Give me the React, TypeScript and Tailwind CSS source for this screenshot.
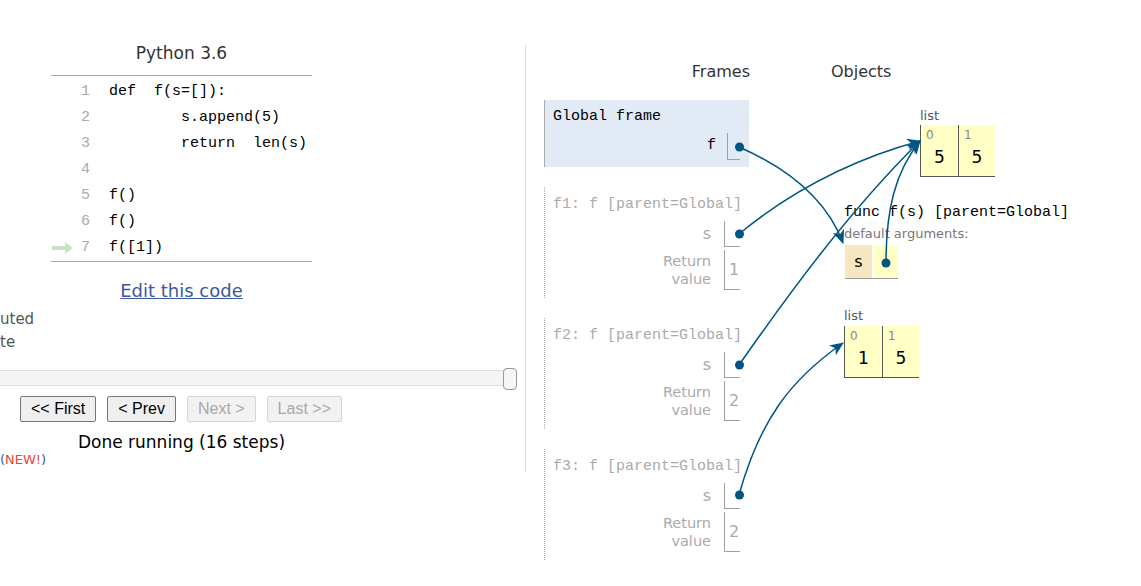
import React from 'react'

const sans = "font-['DejaVu_Sans',Verdana,sans-serif]"
const mono = "font-['Liberation_Mono',monospace]"
const arial = "font-['Liberation_Sans',Arial,sans-serif]"

const code = [
  'def  f(s=[]):',
  '        s.append(5)',
  '        return  len(s)',
  '',
  'f()',
  'f()',
  'f([1])',
]

const ARROW = '#005583'

function CodeLine({ n, text, current }: { n: number; text: string; current?: boolean }) {
  return (
    <div className="flex items-center h-[26px]">
      <div className="w-[22px] h-full flex items-center">
        {current && (
          <svg width="22" height="12" viewBox="0 0 22 12">
            <rect x="1" y="4" width="14" height="4" fill="#c6e4c6" />
            <path d="M14 0 L22 6 L14 12 Z" fill="#c6e4c6" />
          </svg>
        )}
      </div>
      <div className={`w-[17px] text-right text-[15px] text-[#aaa] ${mono}`}>{n}</div>
      <div className={`ml-[19px] whitespace-pre text-[15px] text-black ${mono}`}>{text}</div>
    </div>
  )
}

function Btn({ label, disabled }: { label: string; disabled?: boolean }) {
  return (
    <button
      type="button"
      className={`h-[26px] px-[10px] rounded-[2px] border text-[16px] leading-none ${arial} ${
        disabled ? 'border-[#d4d4d4] bg-[#f2f2f2] text-[#a8a8a8]' : 'border-[#767676] bg-[#efefef] text-black'
      }`}
    >
      {label}
    </button>
  )
}

function VarRow({ name, value, tall, monoName, dim }: { name: string; value?: string; tall?: boolean; monoName?: boolean; dim?: boolean }) {
  return (
    <div className="flex items-center justify-end">
      <div
        className={`text-right whitespace-pre-line ${dim ? 'text-[#aaa]' : 'text-black'} ${
          monoName ? `text-[15px] ${mono}` : tall ? `text-[14.5px] leading-[18px] ${sans}` : `text-[16px] ${sans}`
        }`}
      >
        {name}
      </div>
      <div
        className={`${monoName ? 'ml-[11px] w-[13px] h-[27px]' : 'ml-[13px] w-[16px]'} ${tall ? 'h-[40px]' : monoName ? '' : 'h-[26px]'} border-l border-b border-[#a0a0a0] flex items-center pl-[4px] text-[16px] text-[#aaa] ${sans}`}
      >
        {value}
      </div>
    </div>
  )
}

function Frame({ title, ret }: { title: string; ret: string }) {
  return (
    <div className="mt-[20px] h-[111px] border-l border-dotted border-[#aaa] pl-[8px] pt-[9px] pr-[9px]">
      <div className={`whitespace-nowrap text-[15px] leading-[17px] text-[#aaa] ${mono}`}>{title}</div>
      <div className="mt-[8px]">
        <VarRow name="s" dim />
      </div>
      <div className="mt-[3px]">
        <VarRow name={'Return\nvalue'} value={ret} tall dim />
      </div>
    </div>
  )
}

function ListCells({ items }: { items: string[] }) {
  return (
    <div className="flex">
      {items.map((v, i) => (
        <div
          key={i}
          className={`h-[52px] bg-[#ffffc6] border-b border-l border-[#555] ${i === 0 ? 'w-[38px]' : 'w-[37px]'} flex flex-col`}
        >
          <div className={`pt-[3px] pl-[5px] text-[12px] leading-[14px] text-[#888] ${sans}`}>{i}</div>
          <div className={`mt-[5px] text-center text-[17px] leading-[20px] text-black ${sans}`}>{v}</div>
        </div>
      ))}
    </div>
  )
}

export default function App() {
  return (
    <div className="relative w-[1141px] h-[586px] overflow-hidden bg-white">
      <div className="flex items-start">
        {/* left: code + controls */}
        <div className="w-[526px] shrink-0 mt-[45px] h-[427px] border-r border-[#ddd]">
          <div className="ml-[51px] w-[261px]">
            <div className={`text-center text-[17px] leading-[17px] text-[#333] ${sans}`}>Python 3.6</div>
            <div className="mt-[13px] border-t border-b border-[#aaa] pt-[3px]">
              {code.map((t, i) => (
                <CodeLine key={i} n={i + 1} text={t} current={i === 6} />
              ))}
            </div>
            <div className={`mt-[19px] text-center text-[18px] leading-[20px] ${sans}`}>
              <a className="text-[#3d58a2] underline">Edit this code</a>
            </div>
          </div>
          <div className={`mt-[7px] text-[15px] leading-[23px] text-[#555] ${sans}`}>
            <div>uted</div>
            <div>te</div>
          </div>
          <div className="relative mt-[14px] h-[22px] w-[517px]">
            <div className="absolute left-0 top-[2px] h-[16px] w-[510px] border-y border-[#ddd] bg-[#f5f5f5]" />
            <div className="absolute left-[503px] top-0 h-[22px] w-[14px] rounded-[4px] border border-[#999] bg-[#f6f6f6]" />
          </div>
          <div className="mt-[6px] ml-[20px] flex gap-[11px]">
            <Btn label="<< First" />
            <Btn label="< Prev" />
            <Btn label="Next >" disabled />
            <Btn label="Last >>" disabled />
          </div>
          <div className={`ml-[51px] w-[261px] mt-[10px] text-center text-[17px] leading-[20px] text-black ${sans}`}>
            Done running (16 steps)
          </div>
          <div className={`text-[13px] leading-[16px] ${sans}`}>
            <span className="text-[#3d58a2]">(</span>
            <span className="text-[#e8453c]">NEW!</span>
            <span className="text-[#3d58a2]">)</span>
          </div>
        </div>

        {/* right: frames and objects */}
        <div className="flex-1">
          <div className={`mt-[64px] flex text-[16px] leading-[16px] text-[#333] ${sans}`}>
            <div className="w-[224px] text-right">Frames</div>
            <div className="ml-[81px]">Objects</div>
          </div>
          <div className="mt-[20px] flex items-start">
            <div className="ml-[18px] w-[205px] shrink-0">
              <div className="h-[67px] bg-[#e2eaf6] border-l border-[#aaa] pl-[8px] pt-[8px] pr-[9px]">
                <div className={`text-[15px] leading-[17px] text-black ${mono}`}>Global frame</div>
                <div className="mt-[8px]">
                  <VarRow name="f" monoName />
                </div>
              </div>
              <Frame title="f1: f [parent=Global]" ret="1" />
              <Frame title="f2: f [parent=Global]" ret="2" />
              <Frame title="f3: f [parent=Global]" ret="2" />
            </div>

            <div className="ml-[95px]">
              <div className="ml-[76px] mt-[8px]">
                <div className={`text-[13px] leading-[15px] text-[#555] ${sans}`}>list</div>
                <div className="mt-[2px]">
                  <ListCells items={['5', '5']} />
                </div>
              </div>
              <div className={`mt-[27px] text-[15px] leading-[17px] text-black whitespace-pre ${mono}`}>
                func f(s) [parent=Global]
              </div>
              <div className={`mt-[5px] text-[13px] leading-[16px] text-[#777] ${sans}`}>default arguments:</div>
              <div className="mt-[3px] ml-[1px] flex gap-[1px] border-b border-[#999] w-fit">
                <div className={`w-[27px] h-[33px] bg-[#f7e7c0] flex items-center justify-center text-[16px] text-black ${sans}`}>s</div>
                <div className="w-[25px] h-[33px] bg-[#ffffc6]" />
              </div>
              <div className="mt-[29px]">
                <div className={`text-[13px] leading-[15px] text-[#555] ${sans}`}>list</div>
                <div className="mt-[3px]">
                  <ListCells items={['1', '5']} />
                </div>
              </div>
            </div>
          </div>
        </div>
      </div>

      {/* pointer arrows */}
      <svg className="absolute left-0 top-0 pointer-events-none" width="1141" height="586" viewBox="0 0 1141 586">
        <defs>
          <marker id="ah" markerUnits="userSpaceOnUse" markerWidth="14" markerHeight="12" refX="13" refY="6" orient="auto">
            <path d="M0 0 L14 6 L0 12 L4 6 Z" fill={ARROW} />
          </marker>
        </defs>
        <g fill="none" stroke={ARROW} strokeWidth="1.5">
          <path d="M739 147 C780 165 825 195 843 243" markerEnd="url(#ah)" />
          <path d="M739 234 C790 192 850 160 920 141" markerEnd="url(#ah)" />
          <path d="M739 365 C790 292 850 210 920 141" markerEnd="url(#ah)" />
          <path d="M886 263 C886 210 895 172 920 141" markerEnd="url(#ah)" />
          <path d="M739 495 C760 420 790 380 843 343" markerEnd="url(#ah)" />
        </g>
        <g fill={ARROW}>
          <circle cx="739.5" cy="147" r="4.5" />
          <circle cx="739.5" cy="234" r="4.5" />
          <circle cx="739.5" cy="365" r="4.5" />
          <circle cx="739.5" cy="495" r="4.5" />
          <circle cx="886" cy="263" r="4.5" />
        </g>
      </svg>
    </div>
  )
}
